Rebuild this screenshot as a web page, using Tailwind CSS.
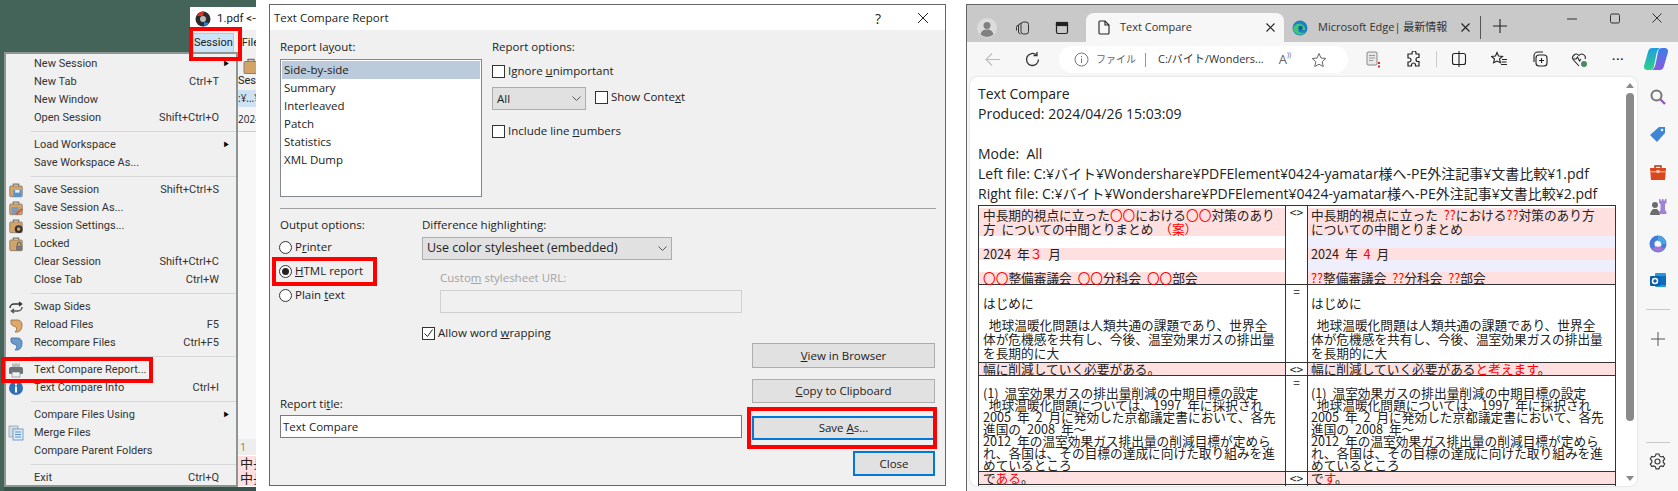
<!DOCTYPE html>
<html lang="ja">
<head>
<meta charset="UTF-8">
<title>Text Compare Report</title>
<script src="https://cdn.jsdelivr.net/npm/@tailwindcss/browser@4"></script>
</head>
<body class="bg-white">
<svg width="0" height="0" class="absolute">
  <defs>
    <g id="brief">
      <path d="M6 5V2.500h6V5" fill="none" stroke="#7d7464" stroke-width="1.400"/>
      <rect x="2" y="4.500" width="14" height="12" rx="1" fill="#d2a468" stroke="#8a8071"/>
    </g>
  </defs>
</svg>

<div class="relative w-[1678px] h-[491px] overflow-hidden text-[#222] font-['Open_Sans','Noto_Sans_CJK_JP',sans-serif]">

  <!-- desktop behind the menu -->
  <div class="absolute left-0 top-0 w-[256px] h-[491px] bg-[#44645a]"></div>

  <!-- back window -->
  <div class="absolute left-[190px] top-[7px] w-[66px] h-[480px] bg-white overflow-hidden flex flex-col text-[11px]">
    <div class="h-[23px] flex items-center gap-[6px] pl-[5px] shrink-0">
      <svg class="w-4 h-4 shrink-0" viewBox="0 0 16 16"><circle cx="8" cy="8" r="7.500" fill="#2b2b2b"/><path d="M2 5a7 7 0 0 1 7-4.500L8 5z" fill="#d4342a"/><path d="M14 12a7 7 0 0 1-5 3.500L9 11z" fill="#2a7bd4"/><circle cx="8" cy="8" r="3" fill="#bdbdbd"/></svg>
      <span class="whitespace-nowrap text-[11.5px] font-['Roboto',sans-serif]">1.pdf &lt;--</span>
    </div>
    <div class="h-[26px] bg-[#f0f0f0] flex items-center shrink-0 font-['Roboto',sans-serif]">
      <div class="ml-[3px] w-[44px] h-[20px] bg-[#cce4f7] border border-[#a9d0ef] flex items-center justify-center">Session</div>
      <span class="ml-[8px]">File</span>
    </div>
    <div class="h-[34px] bg-[#f0f0f0] relative shrink-0 overflow-hidden font-['Roboto',sans-serif]">
      <svg class="absolute left-[52px] top-[1px] w-[18px] h-[18px]" viewBox="0 0 18 18"><use href="#brief"/></svg>
      <span class="absolute left-[48px] top-[17px]">Session</span>
    </div>
    <div class="h-[17px] bg-[#cfe2f3] pl-[48px] flex items-center shrink-0 text-[10px] whitespace-nowrap">:¥...¥</div>
    <div class="h-[25px] bg-[#f5f5f5] border-b border-[#ccc] pl-[48px] flex items-center shrink-0 text-[10px] whitespace-nowrap">2024/</div>
    <div class="flex-1 bg-[#f7f7f7]"></div>
    <div class="h-[16px] bg-[#eee] pl-[50px] text-[#c27a1c] flex items-center shrink-0">1</div>
    <div class="h-[15px] bg-[#ffe0e0] pl-[50px] mt-[1px] text-[13px] leading-[15px] shrink-0 whitespace-nowrap">中長</div>
    <div class="h-[15px] bg-[#ffe0e0] pl-[50px] text-[13px] leading-[15px] shrink-0 whitespace-nowrap">中長</div>
    <div class="h-[1px] shrink-0"></div>
  </div>
  <div class="absolute left-[4px] top-[487px] w-[252px] h-[4px] bg-[#37544b]"></div>

  <!-- red box over Session -->
  <div class="absolute left-[189px] top-[27px] w-[53px] h-[34px] border-4 border-[#f00] z-20"></div>

  <!-- Session menu -->
  <div class="absolute left-[4px] top-[52px] w-[234px] h-[435px] z-10 bg-[#f0f0f0] border-2 border-[#8e9693] pt-[1px] text-[11px] text-[#333] font-['Roboto',sans-serif]">
    <div class="h-[18px] flex items-center justify-between pl-[28px] pr-[6px]"><span>New Session</span><span class="text-[7px] text-black">▶</span></div>
    <div class="h-[18px] flex items-center justify-between pl-[28px] pr-[17px]"><span>New Tab</span><span>Ctrl+T</span></div>
    <div class="h-[18px] flex items-center justify-between pl-[28px] pr-[17px]"><span>New Window</span></div>
    <div class="h-[18px] flex items-center justify-between pl-[28px] pr-[17px]"><span>Open Session</span><span>Shift+Ctrl+O</span></div>
    <div class="h-[9px] flex items-center ml-[25px]"><div class="w-full h-[1px] bg-[#d6d6d6]"></div></div>
    <div class="h-[18px] flex items-center justify-between pl-[28px] pr-[6px]"><span>Load Workspace</span><span class="text-[7px] text-black">▶</span></div>
    <div class="h-[18px] flex items-center pl-[28px]"><span>Save Workspace As...</span></div>
    <div class="h-[9px] flex items-center ml-[25px]"><div class="w-full h-[1px] bg-[#d6d6d6]"></div></div>

    <div class="h-[18px] flex items-center justify-between pr-[17px]">
      <span class="flex items-center">
        <svg class="w-[16px] h-[16px] ml-[2px] mr-[10px]" viewBox="0 0 18 18"><use href="#brief"/><rect x="6" y="9" width="9" height="8" fill="#5b93c9"/><rect x="8" y="9" width="5" height="3" fill="#e8eef5"/></svg>
        Save Session</span><span>Shift+Ctrl+S</span>
    </div>
    <div class="h-[18px] flex items-center justify-between pr-[17px]">
      <span class="flex items-center">
        <svg class="w-[16px] h-[16px] ml-[2px] mr-[10px]" viewBox="0 0 18 18"><use href="#brief"/><rect x="4" y="8" width="8" height="8" fill="#7f9ab5"/><path d="M9 16l7-6" stroke="#d9552b" stroke-width="2"/></svg>
        Save Session As...</span>
    </div>
    <div class="h-[18px] flex items-center justify-between pr-[17px]">
      <span class="flex items-center">
        <svg class="w-[16px] h-[16px] ml-[2px] mr-[10px]" viewBox="0 0 18 18"><use href="#brief"/><circle cx="12" cy="12.500" r="3.200" fill="none" stroke="#333" stroke-width="2.400"/></svg>
        Session Settings...</span>
    </div>
    <div class="h-[18px] flex items-center justify-between pr-[17px]">
      <span class="flex items-center">
        <svg class="w-[16px] h-[16px] ml-[2px] mr-[10px]" viewBox="0 0 18 18"><use href="#brief"/><rect x="9" y="11" width="7" height="5.500" fill="#777"/><path d="M10.500 11V9a2 2 0 0 1 4 0v2" fill="none" stroke="#555"/></svg>
        Locked</span>
    </div>
    <div class="h-[18px] flex items-center justify-between pl-[28px] pr-[17px]"><span>Clear Session</span><span>Shift+Ctrl+C</span></div>
    <div class="h-[18px] flex items-center justify-between pl-[28px] pr-[17px]"><span>Close Tab</span><span>Ctrl+W</span></div>
    <div class="h-[9px] flex items-center ml-[25px]"><div class="w-full h-[1px] bg-[#d6d6d6]"></div></div>

    <div class="h-[18px] flex items-center">
      <svg class="w-[16px] h-[16px] ml-[2px] mr-[10px]" viewBox="0 0 16 16" fill="none" stroke="#333" stroke-width="1.500"><path d="M2 9a4 4 0 0 1 4-4h7M11 3l2.500 2L11 7"/><path d="M14 8a4 4 0 0 1-4 4H4M6 10l-2.500 2L6 14" stroke="#555"/></svg>
      Swap Sides
    </div>
    <div class="h-[18px] flex items-center justify-between pr-[17px]">
      <span class="flex items-center">
        <svg class="w-[16px] h-[16px] ml-[2px] mr-[10px]" viewBox="0 0 16 16"><path d="M3 3h7a4.500 4.500 0 0 1 4 5c0 4-2 7-5 7H7c2-2 2-3.500 1-5-1-1-3-1-3-1L3 7z" fill="#e0a868" stroke="#8f6a3e" stroke-width=".8"/></svg>
        Reload Files</span><span>F5</span>
    </div>
    <div class="h-[18px] flex items-center justify-between pr-[17px]">
      <span class="flex items-center">
        <svg class="w-[16px] h-[16px] ml-[2px] mr-[10px]" viewBox="0 0 16 16"><path d="M3 3h7a4.500 4.500 0 0 1 4 5c0 4-2 7-5 7H7c2-2 2-3.500 1-5-1-1-3-1-3-1L3 7z" fill="#6a9bcd" stroke="#3d6a96" stroke-width=".8"/></svg>
        Recompare Files</span><span>Ctrl+F5</span>
    </div>
    <div class="h-[9px] flex items-center ml-[25px]"><div class="w-full h-[1px] bg-[#d6d6d6]"></div></div>

    <div class="h-[18px] flex items-center">
      <svg class="w-[16px] h-[16px] ml-[2px] mr-[10px]" viewBox="0 0 16 16"><rect x="4" y="1.500" width="8" height="4" fill="#bbb"/><rect x="1" y="5" width="14" height="7" rx="1.500" fill="#6d7378"/><rect x="4" y="10" width="8" height="5" fill="#eef1f4" stroke="#777" stroke-width=".6"/></svg>
      Text Compare Report...
    </div>
    <div class="h-[18px] flex items-center justify-between pr-[17px]">
      <span class="flex items-center">
        <svg class="w-[16px] h-[16px] ml-[2px] mr-[10px]" viewBox="0 0 16 16"><circle cx="8" cy="8" r="7" fill="#2f6fb5"/><rect x="7" y="6.500" width="2" height="6" fill="#fff"/><rect x="7" y="3.500" width="2" height="2" fill="#fff"/></svg>
        Text Compare Info</span><span>Ctrl+I</span>
    </div>
    <div class="h-[9px] flex items-center ml-[25px]"><div class="w-full h-[1px] bg-[#d6d6d6]"></div></div>

    <div class="h-[18px] flex items-center justify-between pl-[28px] pr-[6px]"><span>Compare Files Using</span><span class="text-[7px] text-black">▶</span></div>
    <div class="h-[18px] flex items-center">
      <svg class="w-[16px] h-[16px] ml-[2px] mr-[10px]" viewBox="0 0 16 16"><rect x="1" y="1" width="9" height="11" fill="#d5dde6" stroke="#8c98a5" stroke-width=".7"/><rect x="5" y="4" width="10" height="11" fill="#dcecfa" stroke="#5b8fc4" stroke-width=".8"/><path d="M7 7h6M7 9.500h6M7 12h6" stroke="#5b8fc4"/></svg>
      Merge Files
    </div>
    <div class="h-[18px] flex items-center pl-[28px]">Compare Parent Folders</div>
    <div class="h-[9px] flex items-center ml-[25px]"><div class="w-full h-[1px] bg-[#d6d6d6]"></div></div>
    <div class="h-[18px] flex items-center justify-between pl-[28px] pr-[17px]"><span>Exit</span><span>Ctrl+Q</span></div>
  </div>

  <!-- red box over Text Compare Report -->
  <div class="absolute left-[1px] top-[357px] w-[152px] h-[26px] border-4 border-[#f00] z-20"></div>

  <!-- dialog -->
  <div class="absolute left-[269px] top-[4px] w-[677px] h-[482px] bg-[#f0f0f0] border border-[#666] text-[11.5px] text-[#222]">
    <div class="h-[25px] bg-white flex items-center pl-[4px] relative">
      <span>Text Compare Report</span>
      <span class="absolute left-[605px] top-[3px] text-[14px]">?</span>
      <svg class="absolute left-[647px] top-[7px] w-[12px] h-[12px]" viewBox="0 0 12 12" stroke="#222" fill="none"><path d="M1 1l10 10M11 1L1 11"/></svg>
    </div>
    <div class="pl-[10px] pt-[9px]">
      <div class="flex gap-[10px]">
        <div class="w-[202px]">
          <div class="h-[16px] leading-[16px]">Report la<u>y</u>out:</div>
          <div class="mt-[4px] h-[138px] bg-white border border-[#828790] p-[1px]">
            <div class="h-[18px] bg-[#bccbdb] pl-[2px] leading-[18px]">Side-by-side</div>
            <div class="h-[18px] pl-[2px] leading-[18px]">Summary</div>
            <div class="h-[18px] pl-[2px] leading-[18px]">Interleaved</div>
            <div class="h-[18px] pl-[2px] leading-[18px]">Patch</div>
            <div class="h-[18px] pl-[2px] leading-[18px]">Statistics</div>
            <div class="h-[18px] pl-[2px] leading-[18px]">XML Dump</div>
          </div>
        </div>
        <div>
          <div class="h-[16px] leading-[16px]">Report options:</div>
          <div class="mt-[8px] h-[16px] flex items-center gap-[3px]">
            <span class="w-[13px] h-[13px] bg-white border border-[#333]"></span>
            <span>Ignore <u>u</u>nimportant</span>
          </div>
          <div class="mt-[8px] flex items-start">
            <div class="w-[94px] h-[23px] bg-[#e1e1e1] border border-[#adadad] flex items-center justify-between px-[4px]">
              <span>All</span>
              <svg class="w-[9px] h-[6px]" viewBox="0 0 9 6" fill="none" stroke="#555"><path d="M.5.5l4 4 4-4"/></svg>
            </div>
            <div class="ml-[9px] mt-[2px] h-[16px] flex items-center gap-[3px]">
              <span class="w-[13px] h-[13px] bg-white border border-[#333]"></span>
              <span>Show Conte<u>x</u>t</span>
            </div>
          </div>
          <div class="mt-[13px] h-[16px] flex items-center gap-[3px]">
            <span class="w-[13px] h-[13px] bg-white border border-[#333]"></span>
            <span>Include line <u>n</u>umbers</span>
          </div>
        </div>
      </div>

      <div class="mt-[11px] w-[656px] h-[1px] bg-[#a0a0a0]"></div>

      <div class="mt-[8px] flex gap-[10px]">
        <div class="w-[462px]">
          <div class="flex">
            <div class="w-[142px] relative">
              <div class="h-[16px] leading-[16px]">Output options:</div>
              <div class="mt-[2px] h-[24px] flex items-center gap-[3px] -ml-[1px]">
                <span class="w-[13px] h-[13px] rounded-full bg-white border border-[#333]"></span>
                <span>P<u>r</u>inter</span>
              </div>
              <div class="h-[24px] flex items-center gap-[3px] -ml-[1px]">
                <span class="w-[13px] h-[13px] rounded-full bg-white border border-[#333] flex items-center justify-center"><span class="w-[7px] h-[7px] rounded-full bg-[#222]"></span></span>
                <span><u>H</u>TML report</span>
              </div>
              <div class="h-[24px] flex items-center gap-[3px] -ml-[1px]">
                <span class="w-[13px] h-[13px] rounded-full bg-white border border-[#333]"></span>
                <span>Plain <u>t</u>ext</span>
              </div>
              <div class="absolute left-[-8px] top-[40px] w-[105px] h-[29px] border-4 border-[#f00]"></div>
            </div>
            <div class="w-[320px]">
              <div class="h-[16px] leading-[16px]">Difference highlighting:</div>
              <div class="mt-[4px] w-[250px] h-[23px] bg-[#e1e1e1] border border-[#adadad] flex items-center justify-between px-[4px]">
                <span class="text-[12.5px]">Use color stylesheet (embedded)</span>
                <svg class="w-[9px] h-[6px]" viewBox="0 0 9 6" fill="none" stroke="#555"><path d="M.5.5l4 4 4-4"/></svg>
              </div>
              <div class="mt-[10px] ml-[18px] h-[16px] leading-[16px] text-[#a3a3a3]">Custo<u>m</u> stylesheet URL:</div>
              <div class="mt-[4px] ml-[18px] w-[302px] h-[23px] bg-[#f0f0f0] border border-[#d0d0d0]"></div>
              <div class="mt-[12px] h-[16px] flex items-center gap-[3px]">
                <span class="w-[13px] h-[13px] bg-white border border-[#333] flex items-center justify-center">
                  <svg class="w-[11px] h-[11px]" viewBox="0 0 11 11" fill="none" stroke="#222"><path d="M1.500 5.500l3 3 5-7"/></svg>
                </span>
                <span>Allow word <u>w</u>rapping</span>
              </div>
            </div>
          </div>
          <div class="mt-[55px] h-[16px] leading-[16px]">Report ti<u>t</u>le:</div>
          <div class="mt-[3px] h-[23px] bg-white border border-[#7a7a7a] pl-[2px] leading-[21px]">Text Compare</div>
        </div>
        <div class="w-[183px] flex flex-col">
          <div class="mt-[126px] h-[25px] bg-[#e1e1e1] border border-[#adadad] flex items-center justify-center"><span><u>V</u>iew in Browser</span></div>
          <div class="mt-[11px] h-[24px] bg-[#e1e1e1] border border-[#adadad] flex items-center justify-center"><span><u>C</u>opy to Clipboard</span></div>
          <div class="mt-[13px] h-[24px] bg-[#e1e1e1] border-2 border-[#0078d7] flex items-center justify-center relative">
            <span>Save <u>A</u>s...</span>
            <div class="absolute left-[-7px] right-[-4px] top-[-11px] bottom-[-11px] border-4 border-[#f00]"></div>
          </div>
          <div class="mt-[11px] self-end w-[82px] h-[25px] bg-[#e1e1e1] border-2 border-[#0078d7] flex items-center justify-center">Close</div>
        </div>
      </div>
    </div>
  </div>

  <!-- Edge window -->
  <div class="absolute left-[966px] top-[4px] w-[712px] h-[487px] border-l border-t border-[#666] flex flex-col bg-[#f7f7f7]">

    <!-- tab strip -->
    <div class="h-[37px] shrink-0 bg-[#c9c9c9] flex pt-[8px] relative">
      <div class="flex items-center">
        <svg class="ml-[10px] w-[20px] h-[20px]" viewBox="0 0 20 20"><circle cx="10" cy="10" r="10" fill="#dcdcdc"/><circle cx="10" cy="7.500" r="3.500" fill="#808080"/><path d="M3.500 16.500c1-4 3.500-5 6.500-5s5.500 1 6.500 5a10 10 0 0 1-13 0z" fill="#808080"/></svg>
        <svg class="ml-[18px] w-[16px] h-[16px]" viewBox="0 0 16 16" fill="none" stroke="#333"><rect x="6" y="2" width="7.500" height="12" rx="2.500"/><path d="M6 3.500A2.500 2.500 0 0 0 3.500 6v6a2.500 2.500 0 0 0 2 2"/><path d="M3.500 5A2.500 2.500 0 0 0 1.500 7.500v3"/></svg>
        <svg class="ml-[23px] w-[16px] h-[16px]" viewBox="0 0 16 16" fill="none" stroke="#222" stroke-width="1.200"><rect x="2.500" y="2.500" width="11" height="11" rx="1.500"/><rect x="2.500" y="2.500" width="11" height="3" fill="#222"/></svg>
      </div>
      <div class="ml-[16px] w-[198px] rounded-t-lg bg-[#f7f7f7] flex items-center pl-[12px] pr-[9px]">
        <svg class="w-[12px] h-[15px] shrink-0" viewBox="0 0 12 15" fill="none" stroke="#222" stroke-width="1.100"><path d="M1 2a1 1 0 0 1 1-1h5l4 4v8a1 1 0 0 1-1 1H2a1 1 0 0 1-1-1z"/><path d="M7 1v4h4"/></svg>
        <span class="ml-[10px] text-[11px] text-[#333]">Text Compare</span>
        <svg class="ml-auto w-[9px] h-[9px]" viewBox="0 0 9 9" stroke="#222" stroke-width="1.100"><path d="M.5.5l8 8M8.500.5l-8 8"/></svg>
      </div>
      <div class="w-[197px] flex items-center pl-[8px] pr-[10px] border-r border-[#555] my-[3px]">
        <svg class="w-[16px] h-[16px] shrink-0" viewBox="0 0 16 16"><circle cx="8" cy="8" r="7.500" fill="#1f7fc4"/><path d="M1 9c1-5 5-6 8-5s5 4 4 6H6c0 2 3 4 8 2a7.500 7.500 0 0 1-13-3z" fill="#3fc47c"/><circle cx="8.500" cy="8" r="2.200" fill="#0d5c9c"/></svg>
        <span class="ml-[10px] text-[11px] text-[#333] whitespace-nowrap">Microsoft Edge| 最新情報</span>
        <svg class="ml-auto w-[9px] h-[9px]" viewBox="0 0 9 9" stroke="#222" stroke-width="1.100"><path d="M.5.5l8 8M8.500.5l-8 8"/></svg>
      </div>
      <svg class="ml-[12px] mt-[6px] w-[14px] h-[14px]" viewBox="0 0 14 14" stroke="#222" stroke-width="1.100"><path d="M7 0v14M0 7h14"/></svg>
      <svg class="absolute left-[600px] top-[13px] w-[10px] h-[2px]" viewBox="0 0 10 2" stroke="#333"><path d="M0 1h10"/></svg>
      <svg class="absolute left-[643px] top-[8px] w-[10px] h-[11px]" viewBox="0 0 10 11" fill="none" stroke="#333"><rect x=".5" y="1" width="9" height="9" rx="1.500"/></svg>
      <svg class="absolute left-[685px] top-[8px] w-[10px] h-[10px]" viewBox="0 0 10 10" stroke="#333"><path d="M.5.5l9 9M9.500.5l-9 9"/></svg>
    </div>

    <!-- toolbar -->
    <div class="h-[35px] shrink-0 flex items-center pb-[1px] relative">
      <svg class="absolute left-[18px] top-[11px] w-[15px] h-[13px]" viewBox="0 0 15 13" fill="none" stroke="#bdbdbd" stroke-width="1.100"><path d="M15 6.500H1M7 .5l-6 6 6 6"/></svg>
      <svg class="absolute left-[57px] top-[9px] w-[17px] h-[17px]" viewBox="0 0 17 17" fill="none" stroke="#333" stroke-width="1.300"><path d="M14.500 8.500a6 6 0 1 1-2-4.500"/><path d="M13 1v3.500H9.500"/></svg>
      <div class="absolute left-[92px] top-[4px] w-[289px] h-[27px] rounded-full bg-white flex items-center text-[11px] text-[#444] pl-[15px]">
        <svg class="w-[15px] h-[15px]" viewBox="0 0 15 15" fill="none" stroke="#777"><circle cx="7.500" cy="7.500" r="6.500"/><path d="M7.500 6.500v4.500M7.500 4v1.200"/></svg>
        <span class="ml-[7px] text-[10px] text-[#666] whitespace-nowrap">ファイル</span>
        <span class="ml-[9px] w-[1px] h-[14px] bg-[#999]"></span>
        <span class="ml-[12px] text-[#333] whitespace-nowrap">C:/バイト/Wonders...</span>
        <span class="ml-[15px] text-[13px] text-[#666] whitespace-nowrap">A<span class="text-[7px] align-top">))</span></span>
        <svg class="ml-[20px] w-[16px] h-[16px]" viewBox="0 0 16 16" fill="none" stroke="#666"><path d="M8 1.500l2 4.500 4.800.5-3.600 3.200 1 4.800L8 12.200 3.800 14.500l1-4.800L1.200 6.500 6 6z"/></svg>
      </div>
      <svg class="absolute left-[398px] top-[9px] w-[16px] h-[17px]" viewBox="0 0 16 17"><rect x="2" y="1" width="10" height="13" rx="1" fill="#e8e8e8" stroke="#888"/><path d="M4 4.500h6M4 7h6M4 9.500h4" stroke="#999"/><rect x="13" y="11" width="2" height="2" fill="#d92a2a"/><rect x="13" y="14.500" width="2" height="2" fill="#d92a2a"/></svg>
      <svg class="absolute left-[439px] top-[9px] w-[16px] h-[17px]" viewBox="0 0 16 17" fill="none" stroke="#222" stroke-width="1.200"><path d="M6 2a2 2 0 0 1 4 0v1h3v3.500h-1a2 2 0 0 0 0 4h1V15H9.500v-1a2 2 0 0 0-4 0v1H2v-4h1a2 2 0 0 0 0-4H2V3h4z"/></svg>
      <span class="absolute left-[469px] top-[9px] w-[1px] h-[16px] bg-[#ccc]"></span>
      <svg class="absolute left-[484px] top-[9px] w-[16px] h-[16px]" viewBox="0 0 16 16" fill="none" stroke="#222" stroke-width="1.100"><rect x="1.500" y="2.500" width="13" height="11" rx="2"/><path d="M8 0v16"/></svg>
      <svg class="absolute left-[524px] top-[9px] w-[16px] h-[16px]" viewBox="0 0 16 16" fill="none" stroke="#222" stroke-width="1.100"><path d="M6 1.500l1.500 3.500 4 .4-3 2.600.9 3.800L6 10 2.600 11.800l.9-3.800-3-2.600 4-.4z"/><path d="M11 8.500h5M10.500 11h5M10 13.500h6"/></svg>
      <svg class="absolute left-[565px] top-[9px] w-[16px] h-[16px]" viewBox="0 0 16 16" fill="none" stroke="#222" stroke-width="1.100"><rect x="4" y="4" width="11" height="11" rx="3"/><path d="M9.500 7v5M7 9.500h5"/><path d="M2 11V5a4 4 0 0 1 4-4h5"/></svg>
      <svg class="absolute left-[604px] top-[9px] w-[17px] h-[17px]" viewBox="0 0 17 17" fill="none" stroke="#222" stroke-width="1.100"><path d="M8 15L2.500 9A3.500 3.500 0 0 1 8 4.500 3.500 3.500 0 0 1 14 8"/><path d="M2 8h3l1.500-2 2 4L10 8"/><circle cx="13" cy="13" r="3" fill="#4a8a63" stroke="none"/></svg>
      <span class="absolute left-[645px] top-[11px] text-[11px] font-bold tracking-[1px] leading-[11px]">···</span>
      <svg class="absolute left-[677px] top-[4px] w-[24px] h-[26px]" viewBox="0 0 24 26">
        <defs>
          <linearGradient id="cpa" x1="0" y1="0" x2="0" y2="1"><stop offset="0" stop-color="#1c9ee0"/><stop offset="1" stop-color="#2fd08a"/></linearGradient>
          <linearGradient id="cpb" x1="0" y1="0" x2="0" y2="1"><stop offset="0" stop-color="#3a7ee8"/><stop offset="1" stop-color="#8a5ae0"/></linearGradient>
        </defs>
        <path d="M8 2h8c-2 1-3 3-4 8l-2 10c-.5 3-2 4-4 4H3c-2 0-3.500-2-3-4L4 6c.6-2.500 2-4 4-4z" fill="url(#cpa)"/>
        <path d="M16 24H8c2-1 3-3 4-8l2-10c.5-3 2-4 4-4h3c2 0 3.500 2 3 4L20 20c-.6 2.500-2 4-4 4z" fill="url(#cpb)"/>
      </svg>
    </div>

    <!-- main -->
    <div class="flex-1 flex min-h-0">
      <div class="w-[667px] ml-[3px] h-[409px] bg-white rounded-lg flex overflow-hidden shadow-[0_0_2px_rgba(0,0,0,0.2)]">
        <div class="flex-1 pl-[8px] pt-[7px] overflow-hidden">
          <div class="text-[14px] leading-[20px] text-[#222] whitespace-nowrap">
            <div>Text Compare</div>
            <div>Produced: 2024/04/26 15:03:09</div>
            <div class="h-[20px]"></div>
            <div>Mode:&nbsp; All</div>
            <div>Left file: C:¥バイト¥Wondershare¥PDFElement¥0424-yamatar様へ-PE外注記事¥文書比較¥1.pdf</div>
            <div>Right file: C:¥バイト¥Wondershare¥PDFElement¥0424-yamatar様へ-PE外注記事¥文書比較¥2.pdf</div>
          </div>

          <!-- report table -->
          <div class="mt-[1px] w-[638px] border-l border-t border-[#333] text-[12.7px] leading-[14px] [word-spacing:3px] text-[#222] font-['Noto_Sans_CJK_JP',sans-serif] whitespace-nowrap">
            <div class="h-[79px] grid grid-cols-[307px_22px_308px] border-b border-[#333]">
              <div class="border-r border-[#333] pt-[2px]">
                <div class="h-[28px] bg-[#ffe0e0] pl-[4px]"><div>中長期的視点に立った<span class="text-[#f00]">〇〇</span>における<span class="text-[#f00]">〇〇</span>対策のあり</div><div>方 についての中間とりまとめ <span class="text-[#f00]">（案）</span></div></div>
                <div class="h-[12px]"></div>
                <div class="h-[12px] bg-[#ffe0e0] pl-[4px] leading-[12px]">2024 年<span class="text-[#f00]">３</span> 月</div>
                <div class="h-[12px]"></div>
                <div class="h-[12px] bg-[#ffe0e0] pl-[4px] leading-[12px]"><span class="text-[#f00]">〇〇</span>整備審議会 <span class="text-[#f00]">〇〇</span>分科会 <span class="text-[#f00]">〇〇</span>部会</div>
              </div>
              <div class="border-r border-[#333] text-center text-[12px] leading-[12px]">&lt;&gt;</div>
              <div class="border-r border-[#333] pt-[2px]">
                <div class="h-[28px] bg-[#ffe0e0] pl-[3px]"><div>中長期的視点に立った <span class="text-[#f00]">??</span>における<span class="text-[#f00]">??</span>対策のあり方</div><div>についての中間とりまとめ</div></div>
                <div class="h-[12px] bg-[#eeeefc]"></div>
                <div class="h-[12px] bg-[#ffe0e0] pl-[3px] leading-[12px]">2024 年 <span class="text-[#f00]">4</span> 月</div>
                <div class="h-[12px] bg-[#eeeefc]"></div>
                <div class="h-[12px] bg-[#ffe0e0] pl-[3px] leading-[12px]"><span class="text-[#f00]">??</span>整備審議会 <span class="text-[#f00]">??</span>分科会 <span class="text-[#f00]">??</span>部会</div>
              </div>
            </div>
            <div class="h-[78px] grid grid-cols-[307px_22px_308px] border-b border-[#333]">
              <div class="border-r border-[#333] pt-[11px] pl-[4px]">
                <div>はじめに</div>
                <div class="mt-[8px]">&nbsp;地球温暖化問題は人類共通の課題であり、世界全</div>
                <div>体が危機感を共有し、今後、温室効果ガスの排出量</div>
                <div>を長期的に大</div>
              </div>
              <div class="border-r border-[#333] text-center text-[12px] leading-[12px]">=</div>
              <div class="border-r border-[#333] pt-[11px] pl-[3px]">
                <div>はじめに</div>
                <div class="mt-[8px]">&nbsp;地球温暖化問題は人類共通の課題であり、世界全</div>
                <div>体が危機感を共有し、今後、温室効果ガスの排出量</div>
                <div>を長期的に大</div>
              </div>
            </div>
            <div class="h-[13px] grid grid-cols-[307px_22px_308px] border-b border-[#333] leading-[12px]">
              <div class="border-r border-[#333] bg-[#ffe0e0] pl-[4px]">幅に削減していく必要がある。</div>
              <div class="border-r border-[#333] text-center text-[12px]">&lt;&gt;</div>
              <div class="border-r border-[#333] bg-[#ffe0e0] pl-[3px]">幅に削減していく必要がある<span class="text-[#f00]">と考えます</span>。</div>
            </div>
            <div class="h-[96px] grid grid-cols-[307px_22px_308px] border-b border-[#333] leading-[12px]">
              <div class="border-r border-[#333] pt-[11px] pl-[4px]">
                <div>(1) 温室効果ガスの排出量削減の中期目標の設定</div>
                <div>&nbsp;地球温暖化問題については、1997 年に採択され</div>
                <div>2005 年 2 月に発効した京都議定書において、各先</div>
                <div>進国の 2008 年～</div>
                <div>2012 年の温室効果ガス排出量の削減目標が定めら</div>
                <div>れ、各国は、その目標の達成に向けた取り組みを進</div>
                <div>めているところ</div>
              </div>
              <div class="border-r border-[#333] text-center text-[12px]">=</div>
              <div class="border-r border-[#333] pt-[11px] pl-[3px]">
                <div>(1) 温室効果ガスの排出量削減の中期目標の設定</div>
                <div>&nbsp;地球温暖化問題については、1997 年に採択され</div>
                <div>2005 年 2 月に発効した京都議定書において、各先</div>
                <div>進国の 2008 年～</div>
                <div>2012 年の温室効果ガス排出量の削減目標が定めら</div>
                <div>れ、各国は、その目標の達成に向けた取り組みを進</div>
                <div>めているところ</div>
              </div>
            </div>
            <div class="h-[13px] grid grid-cols-[307px_22px_308px] border-b border-[#333] leading-[12px]">
              <div class="border-r border-[#333] bg-[#ffe0e0] pl-[4px]">で<span class="text-[#f00]">ある</span>。</div>
              <div class="border-r border-[#333] text-center text-[12px]">&lt;&gt;</div>
              <div class="border-r border-[#333] bg-[#ffe0e0] pl-[3px]">で<span class="text-[#f00]">す</span>。</div>
            </div>
            <div class="h-[4px] grid grid-cols-[307px_22px_308px]">
              <div class="border-r border-[#333]"></div>
              <div class="border-r border-[#333]"></div>
              <div class="border-r border-[#333]"></div>
            </div>
          </div>
        </div>

        <!-- scrollbar -->
        <div class="w-[15px] flex flex-col items-center pt-[6px] bg-white">
          <span class="w-0 h-0 border-x-[4px] border-x-transparent border-b-[5px] border-b-[#8a8a8a]"></span>
          <div class="mt-[5px] w-[8px] h-[328px] rounded-full bg-[#8a8a8a]"></div>
          <span class="mt-[55px] w-0 h-0 border-x-[4px] border-x-transparent border-t-[5px] border-t-[#8a8a8a]"></span>
        </div>
      </div>

      <!-- sidebar -->
      <div class="flex-1 flex flex-col items-center pt-[11px]">
        <svg class="w-[18px] h-[18px]" viewBox="0 0 18 18" fill="none"><circle cx="7.500" cy="7.500" r="5" stroke="#777" stroke-width="2"/><path d="M11.500 11.500l4.500 4.500" stroke="#8a5cc4" stroke-width="2.400"/></svg>
        <svg class="mt-[19px] w-[18px] h-[18px]" viewBox="0 0 18 18"><path d="M10 2h6v6l-8 9-7-7z" fill="#3f87d6"/><circle cx="13" cy="5" r="1.300" fill="#e6f0fb"/></svg>
        <svg class="mt-[20px] w-[18px] h-[18px]" viewBox="0 0 18 18"><path d="M6 5V3h6v2" fill="none" stroke="#a33a16" stroke-width="1.400"/><path d="M1 5h16l-1 12H2z" fill="#d9481c"/><rect x="1" y="8" width="16" height="1.400" fill="#f2a37e"/><rect x="7.500" y="7" width="3" height="3" fill="#f4c6ae"/></svg>
        <svg class="mt-[17px] w-[18px] h-[18px]" viewBox="0 0 18 18"><circle cx="6" cy="7" r="3" fill="#6d6d6d"/><path d="M1 17c0-3 2-5 3-6h4c1 1 3 3 3 6z" fill="#6d6d6d"/><path d="M10 1h1.500v1.500H13V1h1.500v1.500H16V1h1.500v4l-1.500 1v6l1.500 2v2H10v-2l1.500-2V6L10 5z" fill="#9f83d6"/></svg>
        <svg class="mt-[19px] w-[18px] h-[18px]" viewBox="0 0 18 18"><circle cx="9" cy="9" r="6" fill="none" stroke="#4a7bd4" stroke-width="5"/><path d="M9 1a8 8 0 0 1 8 8h-5a3 3 0 0 0-3-3z" fill="#49a5e6"/><path d="M3 14a8 8 0 0 0 12 0l-4-3a3 3 0 0 1-4 0z" fill="#a276d8"/></svg>
        <svg class="mt-[18px] w-[18px] h-[18px]" viewBox="0 0 18 18"><rect x="6" y="2" width="11" height="14" rx="1" fill="#1d9ae0"/><rect x="10" y="5" width="7" height="9" fill="#0f6cbd"/><rect x="1" y="5" width="10" height="10" rx="1" fill="#0c5ea8"/><circle cx="6" cy="10" r="2.500" fill="none" stroke="#fff" stroke-width="1.500"/></svg>
        <div class="mt-[20px] w-[24px] h-[1px] bg-[#c8c8c8]"></div>
        <svg class="mt-[22px] w-[14px] h-[14px]" viewBox="0 0 14 14" stroke="#555"><path d="M7 0v14M0 7h14"/></svg>
        <div class="mt-[96px] w-[24px] h-[1px] bg-[#c8c8c8]"></div>
        <svg class="mt-[10px] w-[17px] h-[17px]" viewBox="0 0 17 17" fill="none" stroke="#333" stroke-width="1.100"><circle cx="8.500" cy="8.500" r="2.500"/><path d="M7 1h3l.5 2 1.700 1 2-.6 1.500 2.600-1.500 1.500v2l1.500 1.400-1.500 2.600-2-.6-1.700 1-.5 2H7l-.5-2-1.700-1-2 .6L1.300 11l1.500-1.500v-2L1.300 6l1.500-2.600 2 .6 1.700-1z"/></svg>
      </div>
    </div>
  </div>
</div>
</body>
</html>
